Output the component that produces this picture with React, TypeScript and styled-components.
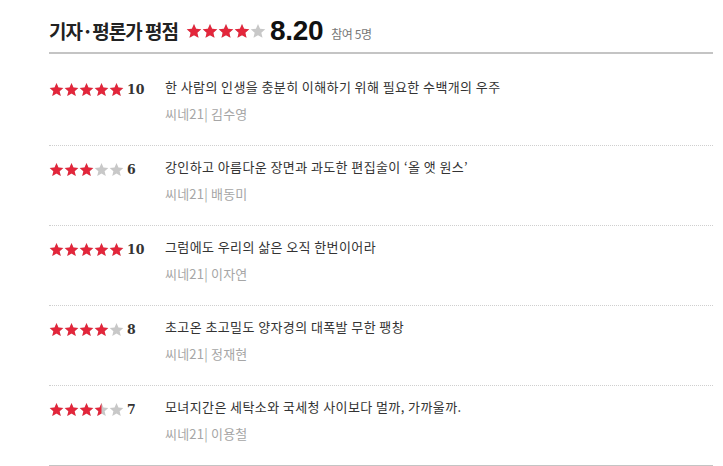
import styled, { createGlobalStyle } from 'styled-components';

const GlobalStyle = createGlobalStyle`
  body {
    margin: 0;
    background: #fff;
    font-family: "Noto Sans CJK KR", "Noto Sans", sans-serif;
  }
`;

type Review = {
  score: number;
  title: string;
  author: string;
};

const reviews: Review[] = [
  { score: 10, title: '한 사람의 인생을 충분히 이해하기 위해 필요한 수백개의 우주', author: '김수영' },
  { score: 6, title: '강인하고 아름다운 장면과 과도한 편집술이 ‘올 앳 원스’', author: '배동미' },
  { score: 10, title: '그럼에도 우리의 삶은 오직 한번이어라', author: '이자연' },
  { score: 8, title: '초고온 초고밀도 양자경의 대폭발 무한 팽창', author: '정재현' },
  { score: 7, title: '모녀지간은 세탁소와 국세청 사이보다 멀까, 가까울까.', author: '이용철' },
];

const Section = styled.section`
  width: 664px;
  padding: 11px 0 0 49px;
`;

const Header = styled.div`
  display: flex;
  align-items: center;
  height: 39px;
  border-bottom: 2px solid #c4c4c4;
  padding-bottom: 2px;
`;

const Title = styled.h2`
  margin: 0;
  font-size: 19px;
  font-weight: 700;
  letter-spacing: -1px;
  color: #222;
`;

const Average = styled.strong`
  margin-left: 4px;
  font-family: "Liberation Sans", Arial, sans-serif;
  font-size: 28px;
  font-weight: 700;
  letter-spacing: -0.3px;
  color: #111;
`;

const Count = styled.span`
  margin-left: 8px;
  margin-top: 6px;
  font-size: 12px;
  letter-spacing: -0.4px;
  color: #777;
`;

const List = styled.ul`
  list-style: none;
  margin: 0;
  padding: 12px 0 0;
  border-bottom: 2px solid #c4c4c4;
`;

const Row = styled.li`
  display: flex;
  height: 79px;
  border-bottom: 1px dotted #cfcfcf;
  &:last-child {
    border-bottom: none;
    height: 79px;
  }
`;

const Rating = styled.div`
  display: flex;
  align-items: center;
  width: 116px;
  height: 22px;
  margin-top: 12px;
`;

const Score = styled.span`
  margin-left: 3px;
  font-family: "DejaVu Serif", "Liberation Serif", serif;
  font-size: 12.5px;
  font-weight: 700;
  color: #333;
`;

const Body = styled.div`
  display: flex;
  flex-direction: column;
  padding-top: 13px;
`;

const Text = styled.p`
  margin: 0;
  font-size: 13px;
  line-height: 16px;
  letter-spacing: 0.4px;
  color: #333;
`;

const Author = styled.p`
  margin: 11px 0 0;
  font-size: 13px;
  line-height: 16px;
  letter-spacing: 0.2px;
  color: #a6a6a6;
`;

const StarBox = styled.span`
  display: inline-flex;
`;

const HeaderStars = styled.span`
  display: inline-flex;
  margin-left: 8px;
`;

const RED = '#e3263b';
const GRAY = '#c8c8c8';
const STAR = 'M12 1.5l3.1 7.2 7.8.7-5.9 5.2 1.8 7.7L12 18.3 5.2 22.3 7 14.6 1.1 9.4l7.8-.7z';

function Star({ fill, size }: { fill: number; size: number }) {
  const id = `half-${size}-${fill}`;
  return (
    <svg width={size} height={size} viewBox="0 0 24 24">
      <defs>
        <clipPath id={id}>
          <rect x="0" y="0" width={24 * fill} height="24" />
        </clipPath>
      </defs>
      <path d={STAR} fill={GRAY} />
      {fill > 0 && <path d={STAR} fill={RED} clipPath={`url(#${id})`} />}
    </svg>
  );
}

function Stars({ score, size }: { score: number; size: number }) {
  const value = score / 2;
  return (
    <StarBox>
      {[0, 1, 2, 3, 4].map(i => (
        <Star key={i} size={size} fill={Math.max(0, Math.min(1, value - i))} />
      ))}
    </StarBox>
  );
}

export default function App() {
  return (
    <>
      <GlobalStyle />
      <Section>
        <Header>
          <Title>기자·평론가 평점</Title>
          <HeaderStars>
            <Stars score={8} size={16} />
          </HeaderStars>
          <Average>8.20</Average>
          <Count>참여 5명</Count>
        </Header>
        <List>
          {reviews.map(r => (
            <Row key={r.author}>
              <Rating>
                <Stars score={r.score} size={15} />
                <Score>{r.score}</Score>
              </Rating>
              <Body>
                <Text>{r.title}</Text>
                <Author>씨네21| {r.author}</Author>
              </Body>
            </Row>
          ))}
        </List>
      </Section>
    </>
  );
}
